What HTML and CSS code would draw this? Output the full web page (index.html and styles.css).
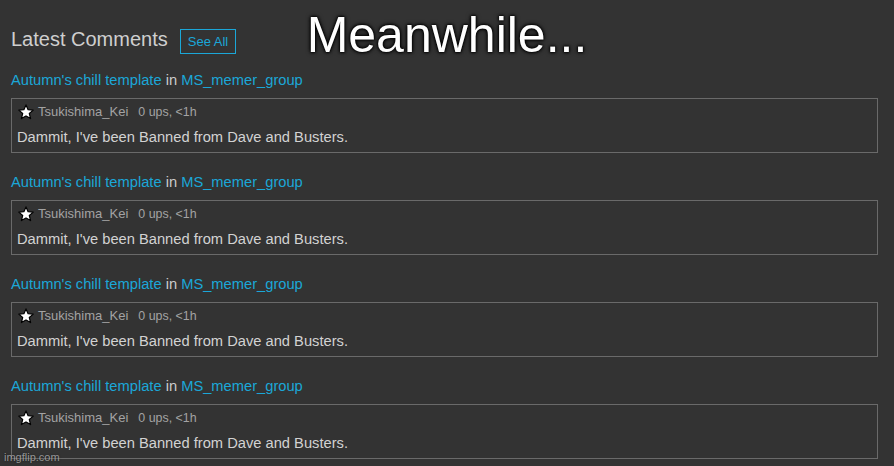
FILE: index.html
```html
<!DOCTYPE html>
<html>
<head>
<meta charset="utf-8">
<link rel="stylesheet" href="styles.css">
</head>
<body>
<div class="page">
  <div class="header">
    <h2 class="title">Latest Comments</h2>
    <a class="see-all">See All</a>
  </div>
  <div class="comments">
    <div class="item">
      <div class="ctx"><a class="lnk">Autumn's chill template</a> in <a class="lnk">MS_memer_group</a></div>
      <div class="box">
        <div class="meta">
          <svg class="star" viewBox="0 0 16 16" width="16" height="16"><path d="M8 0.9 L10.1 5.7 L15.2 6.1 L11.3 9.5 L12.6 14.6 L8 11.9 L3.4 14.6 L4.7 9.5 L0.8 6.1 L5.9 5.7 Z" fill="#fff" stroke="#000" stroke-width="1.2" stroke-linejoin="round"/></svg>
          <span class="user">Tsukishima_Kei</span>
          <span class="stats">0 ups, &lt;1h</span>
        </div>
        <div class="text">Dammit, I've been Banned from Dave and Busters.</div>
      </div>
    </div>
    <div class="item">
      <div class="ctx"><a class="lnk">Autumn's chill template</a> in <a class="lnk">MS_memer_group</a></div>
      <div class="box">
        <div class="meta">
          <svg class="star" viewBox="0 0 16 16" width="16" height="16"><path d="M8 0.9 L10.1 5.7 L15.2 6.1 L11.3 9.5 L12.6 14.6 L8 11.9 L3.4 14.6 L4.7 9.5 L0.8 6.1 L5.9 5.7 Z" fill="#fff" stroke="#000" stroke-width="1.2" stroke-linejoin="round"/></svg>
          <span class="user">Tsukishima_Kei</span>
          <span class="stats">0 ups, &lt;1h</span>
        </div>
        <div class="text">Dammit, I've been Banned from Dave and Busters.</div>
      </div>
    </div>
    <div class="item">
      <div class="ctx"><a class="lnk">Autumn's chill template</a> in <a class="lnk">MS_memer_group</a></div>
      <div class="box">
        <div class="meta">
          <svg class="star" viewBox="0 0 16 16" width="16" height="16"><path d="M8 0.9 L10.1 5.7 L15.2 6.1 L11.3 9.5 L12.6 14.6 L8 11.9 L3.4 14.6 L4.7 9.5 L0.8 6.1 L5.9 5.7 Z" fill="#fff" stroke="#000" stroke-width="1.2" stroke-linejoin="round"/></svg>
          <span class="user">Tsukishima_Kei</span>
          <span class="stats">0 ups, &lt;1h</span>
        </div>
        <div class="text">Dammit, I've been Banned from Dave and Busters.</div>
      </div>
    </div>
    <div class="item">
      <div class="ctx"><a class="lnk">Autumn's chill template</a> in <a class="lnk">MS_memer_group</a></div>
      <div class="box">
        <div class="meta">
          <svg class="star" viewBox="0 0 16 16" width="16" height="16"><path d="M8 0.9 L10.1 5.7 L15.2 6.1 L11.3 9.5 L12.6 14.6 L8 11.9 L3.4 14.6 L4.7 9.5 L0.8 6.1 L5.9 5.7 Z" fill="#fff" stroke="#000" stroke-width="1.2" stroke-linejoin="round"/></svg>
          <span class="user">Tsukishima_Kei</span>
          <span class="stats">0 ups, &lt;1h</span>
        </div>
        <div class="text">Dammit, I've been Banned from Dave and Busters.</div>
      </div>
    </div>
  </div>
  <div class="caption">Meanwhile...</div>
  <div class="watermark">imgflip.com</div>
</div>
</body>
</html>
```

FILE: styles.css
```css
html, body {
  margin: 0;
  padding: 0;
  background: #333333;
}
body {
  font-family: "Liberation Sans", Arial, sans-serif;
  width: 894px;
  height: 466px;
  overflow: hidden;
}
.page {
  position: relative;
  width: 894px;
  height: 466px;
  box-sizing: border-box;
  padding: 28px 16px 0 11px;
}
.header {
  display: flex;
  align-items: center;
  height: 25px;
}
.title {
  margin: 0;
  font-size: 20px;
  font-weight: normal;
  color: #cfcfcf;
  line-height: 24px;
  position: relative;
  top: -2px;
}
.see-all {
  margin-left: 12px;
  box-sizing: border-box;
  height: 25px;
  padding: 0 7px;
  border: 1px solid #1ba7d8;
  color: #1ba7d8;
  font-size: 13px;
  line-height: 23px;
  position: relative;
  top: 1px;
}
.comments {
  margin-top: 18px;
  display: flex;
  flex-direction: column;
  gap: 20px;
}
.ctx {
  font-size: 14.7px;
  line-height: 18px;
  color: #cccccc;
}
.lnk {
  color: #1ba7d8;
}
.box {
  margin-top: 9px;
  border: 1px solid #6a6a6a;
  padding: 4px 5px 6px 5px;
}
.meta {
  display: flex;
  align-items: center;
  height: 18px;
}
.star {
  display: block;
  margin-left: 1px;
  margin-right: 4px;
}
.user {
  font-size: 13px;
  line-height: 16px;
  color: #a3a3a3;
  margin-right: 10px;
}
.stats {
  font-size: 12.4px;
  line-height: 16px;
  color: #a3a3a3;
}
.text {
  margin-top: 7px;
  font-size: 14.7px;
  line-height: 18px;
  color: #d2d2d2;
}
.caption {
  position: absolute;
  left: 0;
  right: 0;
  top: 11px;
  text-align: center;
  font-size: 50px;
  line-height: 49px;
  color: #ffffff;
  text-shadow: 0 0 3px #000, 0 0 5px #000, 0 0 2px #000;
}
.watermark {
  position: absolute;
  left: 4px;
  bottom: 3px;
  font-size: 11px;
  line-height: 12px;
  color: rgba(200, 200, 200, 0.7);
  text-shadow: 0 0 2px rgba(0, 0, 0, 0.5);
}
```
